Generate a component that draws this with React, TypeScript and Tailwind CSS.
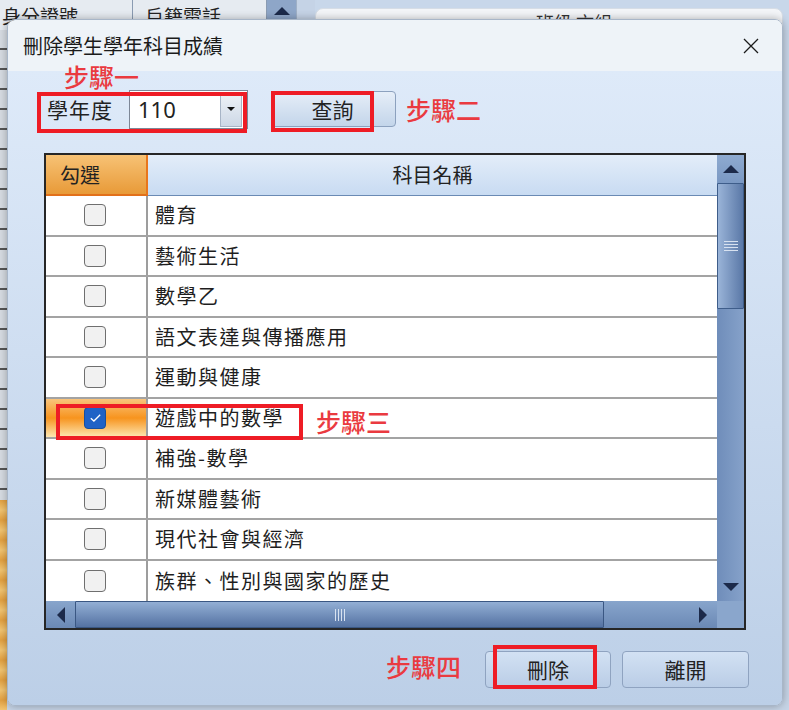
import React from "react";

const subjects = [
  "體育",
  "藝術生活",
  "數學乙",
  "語文表達與傳播應用",
  "運動與健康",
  "遊戲中的數學",
  "補強-數學",
  "新媒體藝術",
  "現代社會與經濟",
  "族群、性別與國家的歷史",
];

function CheckBox({ checked }: { checked: boolean }) {
  if (checked) {
    return (
      <div className="w-[22px] h-[22px] rounded-[4px] bg-[#1f62c6] border border-[#174f9f] flex items-center justify-center">
        <svg width="13" height="10" viewBox="0 0 13 10">
          <path d="M1.8 5.2 L4.9 8 L11.2 1.8" stroke="#ffffff" strokeWidth="1.3" fill="none" />
        </svg>
      </div>
    );
  }
  return <div className="w-[22px] h-[22px] rounded-[4px] border-[1.5px] border-[#6f6f6f] bg-[#f1f1f1]" />;
}

function Tri({ dir }: { dir: "up" | "down" | "left" | "right" }) {
  const p =
    dir === "up"
      ? "M0 8 L8 0 L16 8 Z"
      : dir === "down"
      ? "M0 0 L16 0 L8 8 Z"
      : dir === "left"
      ? "M8 0 L8 16 L0 8 Z"
      : "M0 0 L8 8 L0 16 Z";
  const vert = dir === "up" || dir === "down";
  return (
    <svg width={vert ? 16 : 8} height={vert ? 8 : 16} viewBox={vert ? "0 0 16 8" : "0 0 8 16"}>
      <path d={p} fill="#1c2a4a" />
    </svg>
  );
}

export default function App() {
  const cjk = "font-['Microsoft_JhengHei','Noto_Sans_CJK_TC','Noto_Sans',sans-serif]";
  return (
    <div className={`relative w-[789px] h-[710px] overflow-hidden bg-[#c6d4e6] ${cjk}`}>
      {/* background application */}
      <div className="flex h-[30px] bg-[#c8d7ea]">
        <div className="w-[133px] border-r border-[#8a9bb2] bg-[#e6ebf1] pl-[2px] pt-[6px] text-[19px] leading-none text-[#222]">
          身分證號
        </div>
        <div className="w-[134px] border-r border-[#8a9bb2] bg-[#e6ebf1] pl-[12px] pt-[6px] text-[19px] leading-none text-[#222]">
          戶籍電話
        </div>
        <div className="w-[29px] bg-[#8ea6c8] flex justify-center pt-[7px]">
          <Tri dir="up" />
        </div>
        <div className="w-[19px] bg-[#c5d3e6] border-l border-[#9fb0c6]" />
        <div className="flex-1 pt-[8px] pr-[6px]">
          <div className="h-full rounded-t-[8px] bg-[#f3f5f8] border border-[#d6dde6] flex justify-end pr-[170px] pt-[4px] text-[18px] leading-none text-[#333]">
            班級 文組
          </div>
        </div>
      </div>
      <div className="flex flex-col w-[7px] h-[680px]">
        <div className="h-[470px] bg-[repeating-linear-gradient(to_bottom,#d6dbe2_0px,#d6dbe2_18px,#555_18px,#555_20px)]" />
        <div className="h-[210px] bg-[repeating-linear-gradient(to_bottom,#e3a040_0px,#f2c470_10px,#e3a040_20px)]" />
      </div>

      {/* dialog window */}
      <div className="absolute left-[7px] top-[19px] w-[776px] h-[687px] rounded-[8px] border border-[#a8b6c8] shadow-[0_0_8px_rgba(0,0,0,0.3)] overflow-hidden flex flex-col">
        {/* title bar */}
        <div className="h-[51px] shrink-0 bg-[#eef3f8] flex items-center justify-between pl-[15px] pr-[23px]">
          <div className="text-[20px] leading-none text-[#1b1b1b]">刪除學生學年科目成績</div>
          <svg width="16" height="16" viewBox="0 0 16 16">
            <path d="M1 1 L15 15 M15 1 L1 15" stroke="#1b1b1b" strokeWidth="1.3" />
          </svg>
        </div>

        {/* body */}
        <div className="flex-1 bg-[linear-gradient(to_bottom,#deeaf9,#bccfe7)] px-[36px] pt-[18px] flex flex-col">
          <div className="flex items-center h-[40px]">
            <div className="w-[85px] pl-[3px] text-[21px] leading-none text-[#222] tracking-[1px]">學年度</div>
            <div className="w-[119px] h-[39px] border border-[#7d8797] bg-white flex items-stretch">
              <div className="flex-1 flex items-center pl-[8px] text-[22px] font-['Noto_Sans',sans-serif] text-[#222] leading-none">
                110
              </div>
              <div className="w-[22px] my-[1px] mr-[5px] bg-[linear-gradient(to_bottom,#eef2f7,#cdd8e6)] border border-[#a7b4c6] flex items-center justify-center">
                <svg width="8" height="4" viewBox="0 0 8 4">
                  <path d="M0 0 L8 0 L4 4 Z" fill="#111" />
                </svg>
              </div>
            </div>
            <div className="ml-[23px] w-[125px] h-[36px] rounded-[4px] border border-[#8ca1be] bg-[linear-gradient(to_bottom,#e6eef8,#c3d5ea)] flex items-center justify-center pr-[2px] text-[21px] leading-none text-[#222]">
              查詢
            </div>
          </div>

          {/* grid */}
          <div className="mt-[24px] h-[477px] border-2 border-[#262626] flex flex-col bg-white">
            <div className="flex flex-1 min-h-0">
              <div className="flex-1 flex flex-col">
                <div className="flex h-[41px] shrink-0">
                  <div className="w-[102px] border-r-2 border-r-[#e8761c] border-b-2 border-b-[#e2701a] bg-[linear-gradient(to_bottom,#f7c275,#e89a38)] flex items-center pl-[14px] text-[20px] leading-none text-[#222]">
                    勾選
                  </div>
                  <div className="flex-1 border-b border-[#6a8ab4] bg-[linear-gradient(to_bottom,#e3edf9,#c8dbf2)] flex items-center justify-center text-[20px] leading-none text-[#222]">
                    科目名稱
                  </div>
                </div>
                {subjects.map((s, i) => {
                  const sel = i === 5;
                  return (
                    <div key={s} className="flex h-[40.5px] shrink-0 border-b-2 border-[#a3a3a3] last:border-b-0">
                      <div
                        className={`w-[102px] border-r-2 border-[#9d9d9d] flex items-center justify-center ${
                          sel ? "bg-[linear-gradient(to_bottom,#f9c47c,#f7941e_50%,#fde7b2)]" : "bg-white"
                        }`}
                      >
                        <div className="ml-[-2px]">
                          <CheckBox checked={sel} />
                        </div>
                      </div>
                      <div className="flex-1 flex items-center pl-[7px] text-[20px] tracking-[1.5px] leading-none text-[#1e1e1e] bg-white">
                        {s}
                      </div>
                    </div>
                  );
                })}
              </div>
              {/* vertical scrollbar */}
              <div className="w-[27px] flex flex-col bg-[linear-gradient(to_right,#6f8dba,#86a2ca)]">
                <div className="h-[28px] bg-[linear-gradient(to_bottom,#8eaad0,#7a98c3)] flex items-center justify-center">
                  <Tri dir="up" />
                </div>
                <div className="h-[126px] border border-[#3e5d8a] rounded-[1px] bg-[linear-gradient(to_right,#9ab4d8,#5a78a7)] flex items-center justify-center">
                  <div className="flex flex-col gap-[2px]">
                    <div className="w-[14px] h-[1px] bg-[#d8e2f0]" />
                    <div className="w-[14px] h-[1px] bg-[#d8e2f0]" />
                    <div className="w-[14px] h-[1px] bg-[#d8e2f0]" />
                    <div className="w-[14px] h-[1px] bg-[#d8e2f0]" />
                  </div>
                </div>
                <div className="flex-1" />
                <div className="h-[28px] flex items-center justify-center">
                  <Tri dir="down" />
                </div>
              </div>
            </div>
            {/* horizontal scrollbar */}
            <div className="h-[27px] shrink-0 flex bg-[linear-gradient(to_bottom,#88a5cc,#6b89b5)]">
              <div className="w-[29px] flex items-center justify-center">
                <Tri dir="left" />
              </div>
              <div className="w-[529px] border border-[#3a5783] rounded-[1px] bg-[linear-gradient(to_bottom,#93afd5,#5472a2)] flex items-center justify-center">
                <div className="flex gap-[2px]">
                  <div className="w-[1px] h-[12px] bg-[#d8e2f0]" />
                  <div className="w-[1px] h-[12px] bg-[#d8e2f0]" />
                  <div className="w-[1px] h-[12px] bg-[#d8e2f0]" />
                  <div className="w-[1px] h-[12px] bg-[#d8e2f0]" />
                </div>
              </div>
              <div className="flex-1 flex items-center justify-end pr-[10px]">
                <Tri dir="right" />
              </div>
              <div className="w-[27px] bg-[#8aa6cc]" />
            </div>
          </div>

          {/* buttons */}
          <div className="mt-[21px] flex justify-end gap-[11px] mr-[-3px]">
            <div className="w-[126px] h-[37px] rounded-[4px] border border-[#8fa3c0] bg-[linear-gradient(to_bottom,#d2e1f3,#bacde6)] flex items-center justify-center text-[21px] leading-none text-[#222]">
              刪除
            </div>
            <div className="w-[127px] h-[37px] rounded-[4px] border border-[#8fa3c0] bg-[linear-gradient(to_bottom,#d2e1f3,#bacde6)] flex items-center justify-center text-[21px] leading-none text-[#222]">
              離開
            </div>
          </div>
        </div>

        {/* annotations */}
        <div className="absolute left-[56px] top-[44px] text-[25px] font-medium leading-none text-[#ea3a40]">步驟一</div>
        <div className="absolute left-[398px] top-[77px] text-[25px] font-medium leading-none text-[#ea3a40]">步驟二</div>
        <div className="absolute left-[308px] top-[389px] text-[25px] font-medium leading-none text-[#ea3a40]">步驟三</div>
        <div className="absolute left-[378px] top-[634px] text-[25px] font-medium leading-none text-[#ea3a40]">步驟四</div>

        <div className="absolute left-[29px] top-[72px] w-[210px] h-[41px] border-4 border-[#ee1c25]" />
        <div className="absolute left-[263px] top-[71px] w-[103px] h-[41px] border-4 border-[#ee1c25]" />
        <div className="absolute left-[48px] top-[384px] w-[247px] h-[36px] border-4 border-[#ee1c25]" />
        <div className="absolute left-[485px] top-[625px] w-[104px] h-[44px] border-4 border-[#ee1c25]" />
      </div>
    </div>
  );
}
